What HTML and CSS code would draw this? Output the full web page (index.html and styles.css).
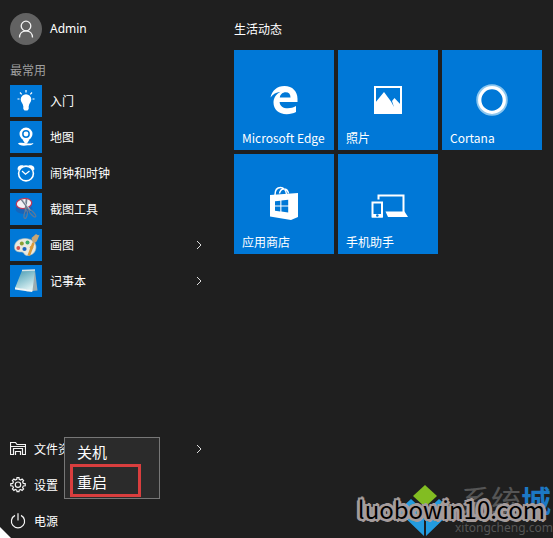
FILE: index.html
```html
<!DOCTYPE html>
<html lang="zh-CN">
<head>
<meta charset="utf-8">
<meta name="viewport" content="width=device-width, initial-scale=1">
<title>开始</title>
<link rel="stylesheet" href="styles.css">
</head>
<body>
<main class="start">
  <nav class="side">
    <a class="user" href="#">
      <svg class="avatar" viewBox="0 0 32 32"><circle cx="16" cy="16" r="16" fill="#626262"/><g fill="none" stroke="#f4f4f4" stroke-width="1.3"><circle cx="16" cy="13" r="4.8"/><path d="M9.500 24.500c0-4 2.700-6.700 6.500-6.700s6.500 2.700 6.500 6.700"/></g></svg>
      <span>Admin</span>
    </a>
    <h2 class="label">最常用</h2>
    <ul class="apps">
      <li><a class="app" href="#">
        <svg class="icon" viewBox="0 0 32 32"><g fill="#fff"><path d="M16 9.200a5.300 5.300 0 0 0-5.300 5.300c0 2.700 2.300 3.600 2.500 6.500h5.600c.2-2.900 2.500-3.800 2.500-6.500A5.300 5.300 0 0 0 16 9.200z"/><path d="M13.300 21h5.400v3l-1.200 1.500h-3L13.300 24z"/></g><path d="M16 5v2.500M10 7.500l1.700 1.900M22 7.500l-1.700 1.900M7.500 14h2M22.500 14h2" stroke="#fff" stroke-width="1.200"/></svg>
        <span>入门</span></a></li>
      <li><a class="app" href="#">
        <svg class="icon" viewBox="0 0 32 32"><circle cx="16" cy="13" r="5.200" fill="none" stroke="#fff" stroke-width="2.600"/><circle cx="16" cy="13" r="2.400" fill="#fff"/><path d="M12.500 18.500h7l-2.500 4h-2z" fill="#fff"/><path d="M8 22.300c2.500-.8 5.500-.6 8 0s5.500.2 7.500-.3c-.5 2.200-4 2.500-6 2.200-3 .9-9 .6-9.500-1.900z" fill="#fff"/></svg>
        <span>地图</span></a></li>
      <li><a class="app" href="#">
        <svg class="icon" viewBox="0 0 32 32"><circle cx="16" cy="16.500" r="7.400" fill="none" stroke="#fff" stroke-width="1.600"/><path d="M8 13.500c-1.500-3.500 1.500-6 5.500-5zM24 13.500c1.500-3.500-1.500-6-5.500-5z" fill="#fff"/><path d="M12 14l3.500 3.200 4-3.200" fill="none" stroke="#fff" stroke-width="1.300"/></svg>
        <span>闹钟和时钟</span></a></li>
      <li><a class="app" href="#">
        <svg class="icon" viewBox="0 0 32 32"><ellipse cx="14" cy="16" rx="8.500" ry="5" fill="#2458a8" opacity=".6"/><ellipse cx="14" cy="10.500" rx="7.800" ry="5" transform="rotate(-8 14 10.500)" fill="#f3f1f5" stroke="#b93a5c" stroke-width="1.300"/><path d="M11.500 6.500l8.200 11M16.500 6l-1 12" stroke="#737e8d" stroke-width="1.800"/><path d="M12.500 6.500l8 11" stroke="#dce5ed" stroke-width=".7"/><g fill="none" stroke="#5c7899" stroke-width="1.300"><ellipse cx="15.700" cy="21.500" rx="1.500" ry="4" transform="rotate(12 15.700 21.500)"/><ellipse cx="22.500" cy="20.500" rx="1.500" ry="4.500" transform="rotate(-42 22.500 20.500)"/></g></svg>
        <span>截图工具</span></a></li>
      <li><a class="app" href="#">
        <svg class="icon" viewBox="0 0 32 32"><path d="M4.500 18c0-5 4.500-8.500 10.500-8.500S26 13 26 18s-3.500 8.500-9 8.500c-3 0-2.500-3-5-3.500-3 0-7.500 0-7.500-5z" fill="#e9e9df" stroke="#aab8bc" stroke-width=".6"/><circle cx="8.300" cy="19" r="1.900" fill="#d55552"/><circle cx="11.800" cy="14.500" r="2" fill="#8b9e32"/><circle cx="17.500" cy="13.500" r="2" fill="#39ac69"/><circle cx="14.500" cy="20" r="2.100" fill="#1c66bf"/><circle cx="21.500" cy="18.500" r="1.800" fill="#e3a53b"/><path d="M23.500 14l-4.700 12.500" stroke="#db9b3b" stroke-width="2.600"/><path d="M21.500 9l4.500-4c1 1.200 2.500 1.500 3.500.8-1 2-1.500 5-3.500 7.500l-3 1z" fill="#c5a676"/></svg>
        <span>画图</span><svg class="chevron" viewBox="0 0 6 10"><path d="M1 1l4 4-4 4"/></svg></a></li>
      <li><a class="app" href="#">
        <svg class="icon" viewBox="0 0 32 32"><defs><linearGradient id="note" x1="0" y1="0" x2=".5" y2="1"><stop offset="0" stop-color="#4195ad"/><stop offset=".6" stop-color="#98cbd6"/><stop offset="1" stop-color="#d6edf0"/></linearGradient></defs><path d="M25 5.500l2.500 20-11 1z" fill="#9bacb1"/><path d="M12 5.500l13-.5-2.500 20.500L5 23z" fill="url(#note)"/><path d="M5 22.500l17.500 2.500-.3 2L5 24.500z" fill="#f0f5f5"/><path d="M12 5.500l13-.5" stroke="#d9e5e8" stroke-width="1.600"/></svg>
        <span>记事本</span><svg class="chevron" viewBox="0 0 6 10"><path d="M1 1l4 4-4 4"/></svg></a></li>
    </ul>
    <div class="system">
      <a class="command" href="#">
        <svg class="glyph" viewBox="0 0 16 16"><path d="M3.500 13.500h-3v-12h5l1.500 2h8.500v10h-3M.5 5.500h15M3.500 14V7.500h9V14M5.500 14v-3.500h5V14"/></svg>
        <span>文件资源管理器</span><svg class="chevron" viewBox="0 0 6 10"><path d="M1 1l4 4-4 4"/></svg></a>
      <a class="command" href="#">
        <svg class="glyph" viewBox="0 0 16 16"><path d="M6.800 2.300 7 .700h2l.2 1.600 1.600.7 1.300-1 1.500 1.500-1 1.300.7 1.600 1.900.2v2.200l-1.900.2-.7 1.600 1 1.300-1.500 1.500-1.300-1-1.600.7-.2 1.600H7l-.2-1.600-1.600-.7-1.300 1-1.500-1.500 1-1.300-.7-1.600-1.900-.2V6.600l1.900-.2.7-1.600-1-1.300L3.900 2l1.300 1z"/><circle cx="8" cy="7.700" r="2.700"/></svg>
        <span>设置</span></a>
      <button class="command" type="button" aria-haspopup="menu" aria-expanded="true">
        <svg class="glyph" viewBox="0 0 16 16"><path d="M5 2.400a6.600 6.600 0 1 0 6 0M8 .3v7.200"/></svg>
        <span>电源</span></button>
      <div class="menu" role="menu">
        <button class="choice" type="button" role="menuitem">关机</button>
        <button class="choice marked" type="button" role="menuitem">重启</button>
      </div>
    </div>
    <svg class="pointer" viewBox="0 0 11 11"><path d="M0 0l11 11H0z" fill="#fff"/></svg>
  </nav>
  <section class="live">
    <h2 class="heading">生活动态</h2>
    <div class="tiles">
      <a class="tile" href="#">
        <svg viewBox="0 0 40 40"><path d="M6.500 17.500C8 10.500 13 6 20.500 6c8 0 13 5.500 13 12.700v3.300H15.600c.2 4.200 3.600 6.300 8.200 6.300 3 0 5.700-.8 8.200-2.200v6c-2.600 1.400-5.700 2.100-9.300 2.100-8.100 0-13.200-4.600-13.200-11.600 0-4.700 2.500-8.700 7-10.900-4.500.5-7.500 2.400-10 5.800zM15.800 17.500h10.700c0-3.300-1.700-5.200-4.800-5.200-3.200 0-5.400 2.200-5.900 5.200z" fill="#fff"/></svg>
        <span>Microsoft Edge</span></a>
      <a class="tile" href="#">
        <svg viewBox="0 0 40 40"><path d="M7 7h26v26H7z" fill="none" stroke="#fff" stroke-width="2"/><path d="M7 23l9-11 7 9.500 3 5.500-2-6 2.500-3 6.500 7v8H7z" fill="#fff"/></svg>
        <span>照片</span></a>
      <a class="tile" href="#">
        <svg viewBox="0 0 40 40"><circle cx="20" cy="20" r="14.500" fill="none" stroke="#8cc7ef" stroke-width="2.500"/><circle cx="20" cy="20" r="12.300" fill="none" stroke="#fff" stroke-width="3.300"/></svg>
        <span>Cortana</span></a>
      <a class="tile" href="#">
        <svg viewBox="0 0 40 40"><path d="M11 11c0-5 2.300-7.500 5.500-7.500s5.500 3 6 6.500M15.500 9.500c.5-3 2-4.500 4.500-4.500s4 1.500 4.500 4.500" fill="none" stroke="#fff" stroke-width="1.500"/><path d="M6 11l28-2v24l-7 3-21-3.500z" fill="#fff"/><path d="M11 17.300l5.300-.6v4.800H11zM17.400 16.500l6.800-.8v5.800h-6.800zM11 22.600h5.300v4.800l-5.300-.7zM17.400 22.600h6.800v5.800l-6.800-.9z" fill="#0078d7"/></svg>
        <span>应用商店</span></a>
      <a class="tile" href="#">
        <svg viewBox="0 0 40 40"><path d="M10.500 15.500v-4h25v17" fill="none" stroke="#fff" stroke-width="2"/><path d="M17.500 27.500h19l3.500 5.500H20z" fill="#fff"/><path d="M4.500 18.500h9.500v14H4.500z" fill="none" stroke="#fff" stroke-width="2"/><path d="M4 30h10.500v3.500H4z" fill="#fff"/><circle cx="9.300" cy="31.500" r="1.300" fill="#0078d7"/></svg>
        <span>手机助手</span></a>
    </div>
  </section>
  <div class="brand">
    <svg class="logo" viewBox="0 0 60 54"><path d="M30 1l12 11-12 11-12-11z" fill="#82bd22"/><path d="M16 15l13 12v25L3 27zM44 15L31 27v25l26-25z" fill="#239bdf"/></svg>
    <div class="owner"><p class="name">系统<b>城</b></p><p class="site">xitongcheng.com</p></div>
    <p class="stamp">luobowin10.com</p>
  </div>
</main>
</body>
</html>
```
FILE: styles.css
```css
* {
  box-sizing: border-box;
}

body {
  margin: 0;
  background: #1f1f1f;
  color: #fff;
  font: 12px/16px "Noto Sans", "Noto Sans CJK SC", sans-serif;
}

h2, p, ul {
  margin: 0;
  padding: 0;
  font-size: 12px;
  font-weight: 400;
  list-style: none;
}

a {
  color: inherit;
  text-decoration: none;
}

button {
  border: 0;
  background: none;
  color: inherit;
  font: inherit;
  text-align: left;
}

.start {
  position: relative;
  display: flex;
  min-height: 100vh;
  overflow: hidden;
}

.side {
  display: flex;
  flex: 0 0 234px;
  flex-direction: column;
  padding: 13px 32px 0 10px;
}

.user, .app {
  display: flex;
  align-items: center;
  gap: 8px;
}

.avatar, .icon {
  width: 32px;
  height: 32px;
}

.icon {
  background: #0078d7;
}

.label {
  margin: 18px 0 6px;
  color: #a0a0a0;
}

.apps {
  display: grid;
  gap: 4px;
}

.app span, .command span {
  padding-top: 2px;
}

.chevron {
  width: 6px;
  height: 10px;
  margin-left: auto;
  fill: none;
  stroke: #ddd;
  stroke-width: 1;
}

.system {
  position: relative;
  display: grid;
  gap: 2px;
  margin-top: auto;
}

.command {
  display: flex;
  align-items: center;
  gap: 8px;
  height: 34px;
  padding: 0;
}

.glyph {
  width: 16px;
  height: 16px;
  fill: none;
  stroke: #f4f4f4;
  stroke-width: 1.2;
}

.menu {
  position: absolute;
  top: 5px;
  left: 54px;
  display: grid;
  width: 96px;
  padding: 0 18px 1px 5px;
  border: 1px solid #777;
  background: #2b2b2b;
}

.choice {
  height: 26px;
  padding: 2px 7px 0;
  font-size: 15px;
  line-height: 20px;
}

.marked {
  height: 33px;
  padding: 2px 4px 0;
  border: 3px solid #d93e3e;
}

.pointer {
  position: absolute;
  bottom: 0;
  left: 0;
  width: 11px;
  height: 11px;
}

.live {
  flex: 1;
  padding: 22px 8px 0 0;
}

.tiles {
  display: grid;
  grid-template-columns: repeat(auto-fill, 100px);
  gap: 4px;
  margin-top: 12px;
}

.tile {
  display: flex;
  flex-direction: column;
  align-items: center;
  justify-content: space-between;
  height: 100px;
  padding: 30px 8px 4px;
  background: #0078d7;
  font-family: "Noto Sans CJK SC", sans-serif;
}

.tile svg {
  width: 40px;
  height: 40px;
}

.tile span {
  align-self: flex-start;
  white-space: nowrap;
}

.brand {
  position: absolute;
  right: 2px;
  bottom: 0;
  display: flex;
  align-items: flex-end;
  height: 56px;
}

.logo {
  width: 60px;
  height: 54px;
}

.owner {
  width: 96px;
  color: #555;
  text-align: right;
}

.name {
  font-size: 30px;
  line-height: 34px;
}

.name b {
  color: #1c78c4;
  font-weight: 700;
}

.site {
  font-size: 12px;
  line-height: 20px;
}

.stamp {
  position: absolute;
  right: 6px;
  bottom: 12px;
  color: #000;
  font: 24px/34px "Noto Sans CJK SC", sans-serif;
  text-shadow: 2px 0 #a49b9b, -2px 0 #a49b9b, 0 2px #a49b9b, 0 -2px #a49b9b,
    2px 2px #a49b9b, -2px 2px #a49b9b, 2px -2px #a49b9b, -2px -2px #a49b9b,
    3px 1px #a49b9b, -3px 1px #a49b9b, 1px 3px #a49b9b, 1px -3px #a49b9b;
}
```
